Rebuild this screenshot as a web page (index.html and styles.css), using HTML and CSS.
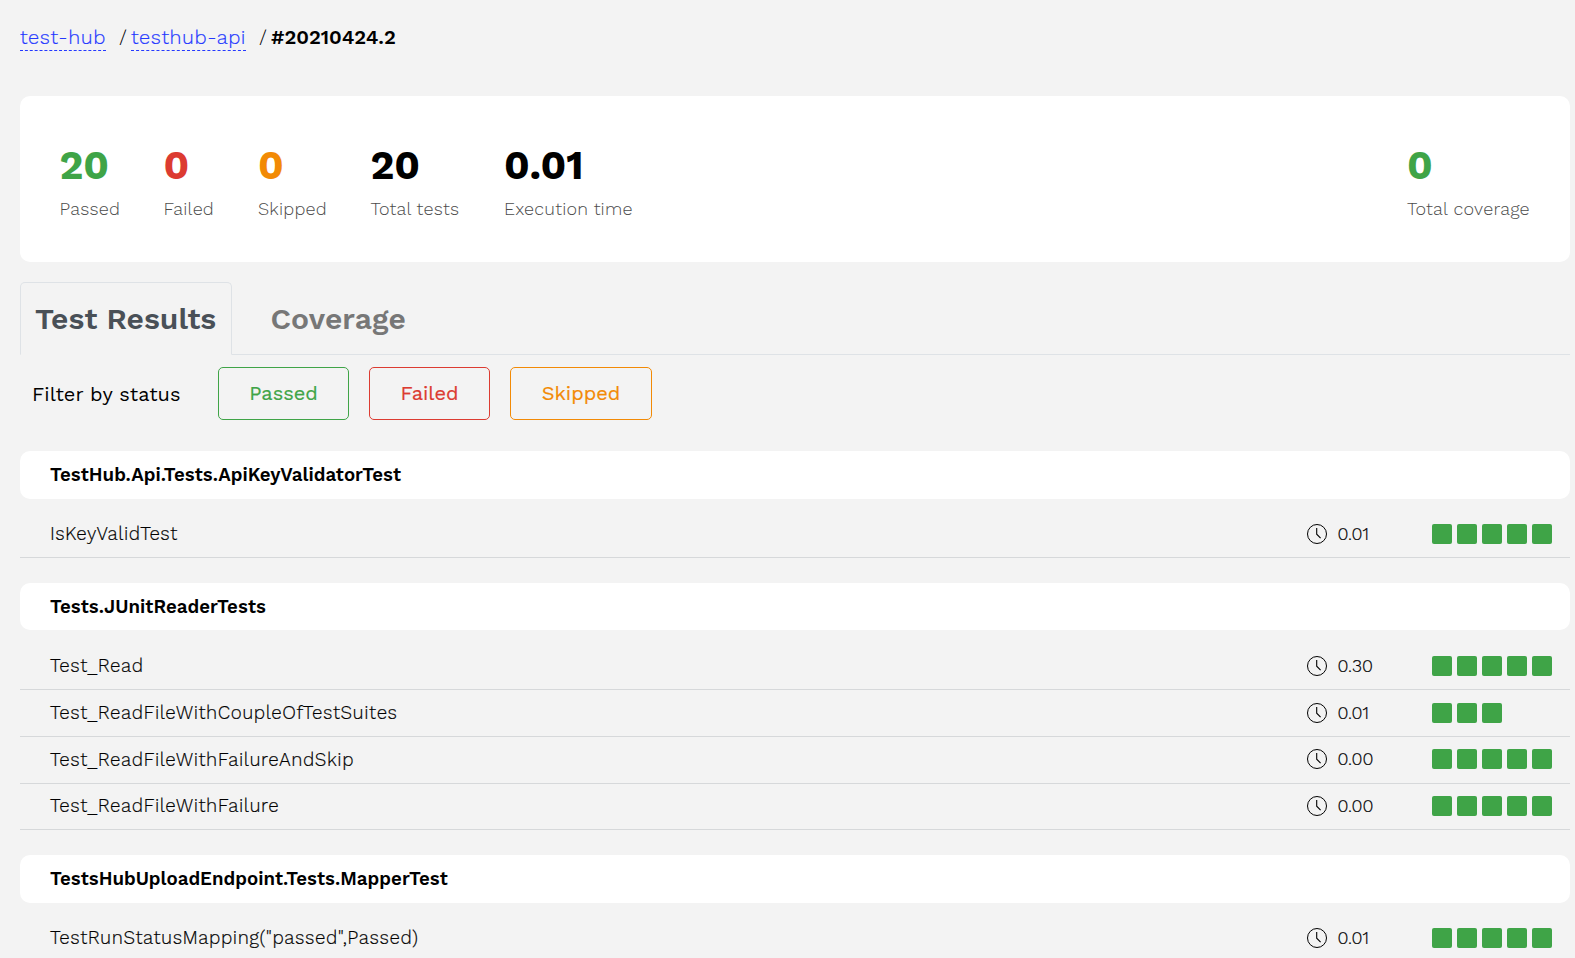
FILE: index.html
```
<!DOCTYPE html>
<html lang="en">
<head>
<meta charset="utf-8">
<title>testhub-api #20210424.2</title>
<link rel="stylesheet" href="styles.css">
</head>
<body>
<svg class="defs" aria-hidden="true">
  <symbol id="clock" viewBox="0 0 20 20"><circle cx="10" cy="10" r="9.5" fill="none" stroke="currentColor" stroke-width="1"/><path d="M9.7 4v6.2l3.9 3.9" fill="none" stroke="currentColor" stroke-width="1.1"/></symbol>
</svg>
<nav class="breadcrumb">
  <a class="crumb" href="#">test-hub</a><span class="sep">/</span><a class="crumb" href="#">testhub-api</a><span class="sep">/</span><strong class="current">#20210424.2</strong>
</nav>
<section class="summary">
  <div class="stat passed"><b>20</b><span>Passed</span></div>
  <div class="stat failed"><b>0</b><span>Failed</span></div>
  <div class="stat skipped"><b>0</b><span>Skipped</span></div>
  <div class="stat total"><b>20</b><span>Total tests</span></div>
  <div class="stat time"><b>0.01</b><span>Execution time</span></div>
  <div class="stat coverage"><b>0</b><span>Total coverage</span></div>
</section>
<div class="tabs">
  <a class="tab active">Test Results</a>
  <a class="tab">Coverage</a>
</div>
<div class="filters">
  <span class="filters-label">Filter by status</span>
  <button class="filter passed">Passed</button>
  <button class="filter failed">Failed</button>
  <button class="filter skipped">Skipped</button>
</div>
<main>
  <section class="group">
    <h2>TestHub.Api.Tests.ApiKeyValidatorTest</h2>
    <div class="row"><span class="name">IsKeyValidTest</span><svg class="clock"><use href="#clock"/></svg><span class="duration">0.01</span><div class="runs"><i></i><i></i><i></i><i></i><i></i></div></div>
  </section>
  <section class="group">
    <h2>Tests.JUnitReaderTests</h2>
    <div class="row"><span class="name">Test_Read</span><svg class="clock"><use href="#clock"/></svg><span class="duration">0.30</span><div class="runs"><i></i><i></i><i></i><i></i><i></i></div></div>
    <div class="row"><span class="name">Test_ReadFileWithCoupleOfTestSuites</span><svg class="clock"><use href="#clock"/></svg><span class="duration">0.01</span><div class="runs"><i></i><i></i><i></i></div></div>
    <div class="row"><span class="name">Test_ReadFileWithFailureAndSkip</span><svg class="clock"><use href="#clock"/></svg><span class="duration">0.00</span><div class="runs"><i></i><i></i><i></i><i></i><i></i></div></div>
    <div class="row"><span class="name">Test_ReadFileWithFailure</span><svg class="clock"><use href="#clock"/></svg><span class="duration">0.00</span><div class="runs"><i></i><i></i><i></i><i></i><i></i></div></div>
  </section>
  <section class="group">
    <h2>TestsHubUploadEndpoint.Tests.MapperTest</h2>
    <div class="row"><span class="name">TestRunStatusMapping("passed",Passed)</span><svg class="clock"><use href="#clock"/></svg><span class="duration">0.01</span><div class="runs"><i></i><i></i><i></i><i></i><i></i></div></div>
  </section>
</main>
</body>
</html>
```

FILE: styles.css
```
* { box-sizing: border-box; }
html { overflow: hidden; }
body {
  margin: 0;
  padding: 0 5px 0 20px;
  height: 958px;
  overflow: hidden;
  background: #f3f3f3;
  color: #000;
  font-family: "Work Sans", Inter, "Liberation Sans", sans-serif;
  font-weight: 300;
}
.defs { display: none; }

.breadcrumb { display: flex; height: 96px; padding-top: 24px; font-size: 20px; line-height: 26px; }
.crumb { height: 27px; color: #2438ff; text-decoration: none; border-bottom: 1px dashed #2438ff; width: 86px; white-space: nowrap; letter-spacing: .56px; -webkit-text-stroke: .2px; }
.crumb + .sep + .crumb { width: 115px; }
.sep { width: 12px; margin-left: 13px; }
.current { font-weight: 600; }

.summary { display: flex; height: 166px; padding: 50px 40px 0 39.5px; background: #fff; border-radius: 10px; }
.stat { display: flex; flex-direction: column; white-space: nowrap; }
.stat b { font-size: 40px; line-height: 40px; font-weight: 700; }
.stat span { margin-top: 11px; font-size: 18px; line-height: 24px; letter-spacing: .2px; color: #4c4c4c; }
.stat.passed { width: 104px; }
.stat.failed { width: 94.5px; }
.stat.skipped { width: 112.5px; }
.stat.total { width: 133.5px; }
.stat.total, .stat.time { color: #000; }
.stat.coverage { width: 123px; margin-left: auto; }
.stat.coverage b { color: #3fa447; }
.passed { color: #3fa447; }
.failed { color: #dc3b31; }
.skipped { color: #f28a05; }

.tabs { display: flex; height: 73px; margin-top: 20px; border-bottom: 1px solid #dee2e6; }
.tab { height: 73px; padding: 0 15px; border: 1px solid transparent; font-size: 30px; line-height: 72px; font-weight: 600; color: #777; white-space: nowrap; }
.tab + .tab { padding-left: 37.5px; }
.tab.active { width: 212px; padding-left: 14px; color: #495057; background: #f3f3f3; border-color: #dee2e6 #dee2e6 #f3f3f3; border-radius: 5px 5px 0 0; }

.filters { display: flex; gap: 20px; height: 96px; padding: 12px 0 31px 12px; }
.filters-label { width: 166px; font-size: 20px; line-height: 54px; font-weight: 400; letter-spacing: .06px; }
.filter { width: 131px; height: 53px; padding: 0 0 2px; border: 1px solid; border-radius: 5px; background: none; font: 440 20px "Work Sans", Inter, sans-serif; -webkit-text-stroke: .2px; }
.filter.failed { width: 121px; }
.filter.skipped { width: 142px; }

.group { padding-bottom: 24.8px; }
.group h2 { height: 47.55px; margin: 0 0 12.75px; padding-left: 30px; background: #fff; border-radius: 10px; font-size: 18.67px; line-height: 49px; font-weight: 600; letter-spacing: .03px; }
.row { display: flex; align-items: center; height: 46.8px; padding: 0 0 .5px 30px; border-bottom: 1px solid #d6d8da; font-size: 18.67px; }
.name { flex: 1; padding-top: 1.5px; letter-spacing: .56px; line-height: 23px; -webkit-text-stroke: .2px; }
.clock { width: 20px; height: 20px; }
.duration { width: 94.5px; margin-left: 10.5px; font-size: 18px; line-height: 22px; -webkit-text-stroke: .2px; }
.runs { display: flex; gap: 5px; width: 138px; }
.runs i { width: 20px; height: 20px; background: #3fa447; border-radius: 2px; }
```
